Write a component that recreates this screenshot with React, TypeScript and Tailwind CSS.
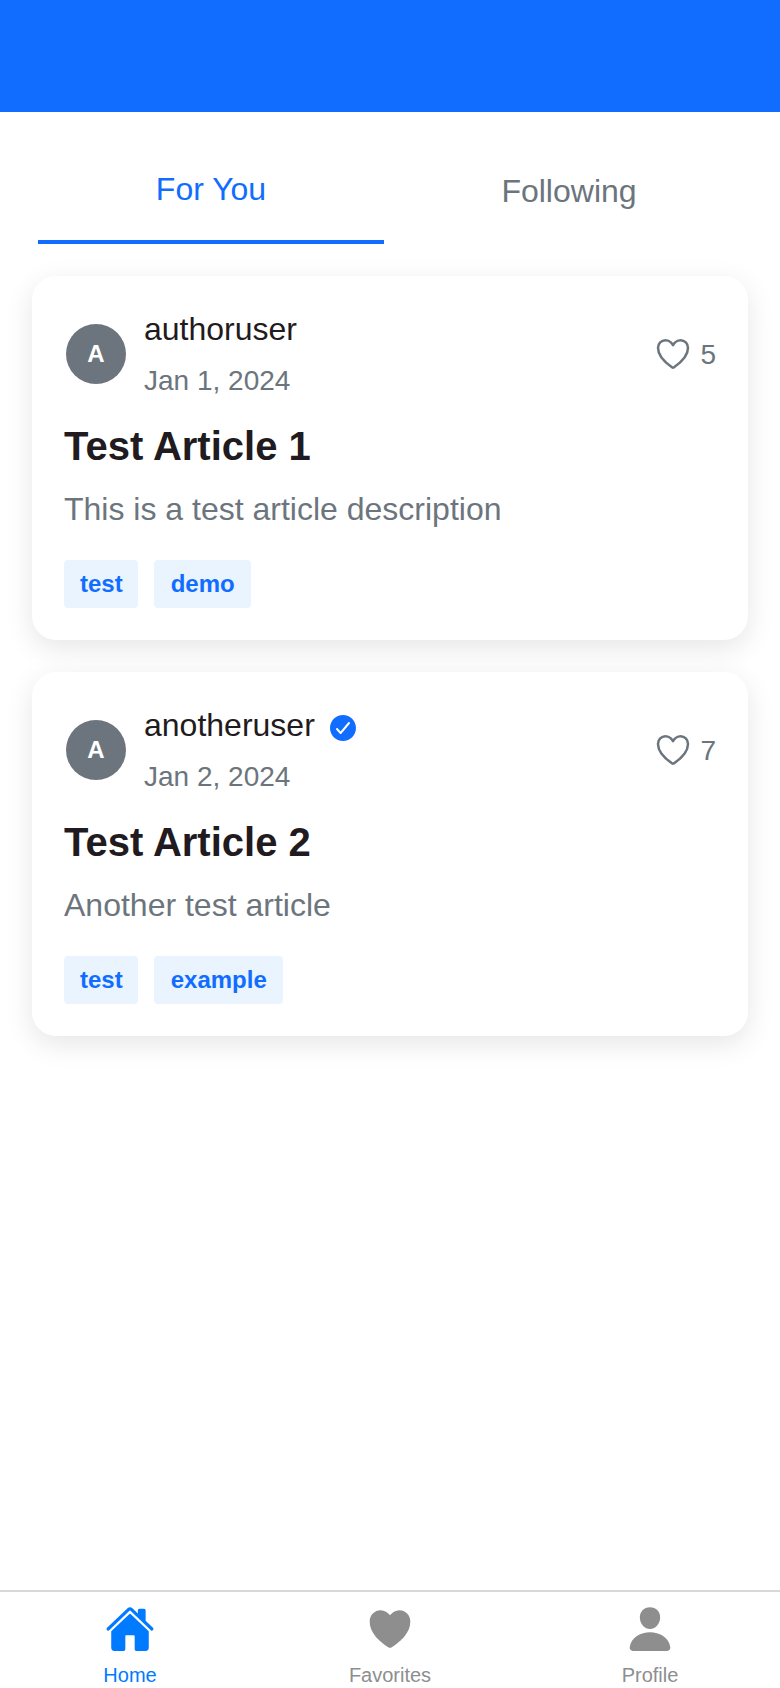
import React from "react";
import { IoCheckmarkCircle, IoHeart, IoHeartOutline, IoHome, IoPerson } from "react-icons/io5";

type Article = {
  author: string;
  verified: boolean;
  date: string;
  title: string;
  description: string;
  tags: string[];
  likes: number;
};

const articles: Article[] = [
  {
    author: "authoruser",
    verified: false,
    date: "Jan 1, 2024",
    title: "Test Article 1",
    description: "This is a test article description",
    tags: ["test", "demo"],
    likes: 5,
  },
  {
    author: "anotheruser",
    verified: true,
    date: "Jan 2, 2024",
    title: "Test Article 2",
    description: "Another test article",
    tags: ["test", "example"],
    likes: 7,
  },
];

function ArticleCard({ article }: { article: Article }) {
  return (
    <article className="h-[364px] rounded-3xl bg-white p-8 shadow-[0_8px_28px_rgba(0,0,0,0.1)]">
      <div className="flex h-[92px] items-center">
        <div className="ml-0.5 flex size-15 items-center justify-center rounded-full bg-[#6c757d] text-2xl font-bold text-white">
          A
        </div>
        <div className="ml-[18px] flex-1">
          <div className="flex h-11 items-center text-[32px] leading-[44px] text-[#1f1b20]">
            {article.author}
            {article.verified && <IoCheckmarkCircle className="mt-1.5 ml-3 size-8 text-[#116dff]" />}
          </div>
          <div className="mt-2.5 text-[28px] leading-[40px] text-[#6c757d]">{article.date}</div>
        </div>
        <div className="flex items-center text-[28px] leading-[40px] text-[#6c757d]">
          <IoHeartOutline className="mr-[7px] size-10" />
          <span className="mt-0.5">{article.likes}</span>
        </div>
      </div>
      <h2 className="mt-[22px] text-[40px] leading-[48px] font-bold text-[#1f1b20]">{article.title}</h2>
      <p className="mt-[17px] text-[32px] leading-[44px] text-[#6c757d]">{article.description}</p>
      <div className="mt-[29px] flex gap-4">
        {article.tags.map((tag) => (
          <span
            key={tag}
            className="h-12 rounded-sm bg-[#e9f4ff] px-4 text-2xl leading-[48px] font-bold text-[#116dff] first:pr-[15px] last:pl-[17px]"
          >
            {tag}
          </span>
        ))}
      </div>
    </article>
  );
}

const navItems = [
  { label: "Home", Icon: IoHome, color: "text-[#007aff]" },
  { label: "Favorites", Icon: IoHeart, color: "text-[#8e8e8f]" },
  { label: "Profile", Icon: IoPerson, color: "text-[#8e8e8f]" },
];

export default function App() {
  return (
    <div className="flex h-[1688px] w-[780px] flex-col overflow-hidden bg-white font-['Liberation_Sans',Arial,sans-serif]">
      <header className="h-28 shrink-0 bg-[#116dff]" />
      <div className="mx-[38px] mt-8 flex h-25 gap-3 text-[32px]">
        <button className="flex-1 border-b-4 border-[#116dff] pb-1.5 text-[#116dff]">For You</button>
        <button className="flex-1 pb-1.5 text-[#6c757d]">Following</button>
      </div>
      <main className="flex flex-1 flex-col gap-8 px-8 pt-8">
        {articles.map((article) => (
          <ArticleCard key={article.title} article={article} />
        ))}
      </main>
      <nav className="flex h-[98px] shrink-0 border-t-2 border-[#d8d8d8] bg-white">
        {navItems.map(({ label, Icon, color }) => (
          <a key={label} className={`flex flex-1 flex-col items-center pt-3 text-xl ${color}`}>
            <Icon className="size-[50px] shrink-0" />
            <span className="mt-[9px] leading-[24px]">{label}</span>
          </a>
        ))}
      </nav>
    </div>
  );
}
